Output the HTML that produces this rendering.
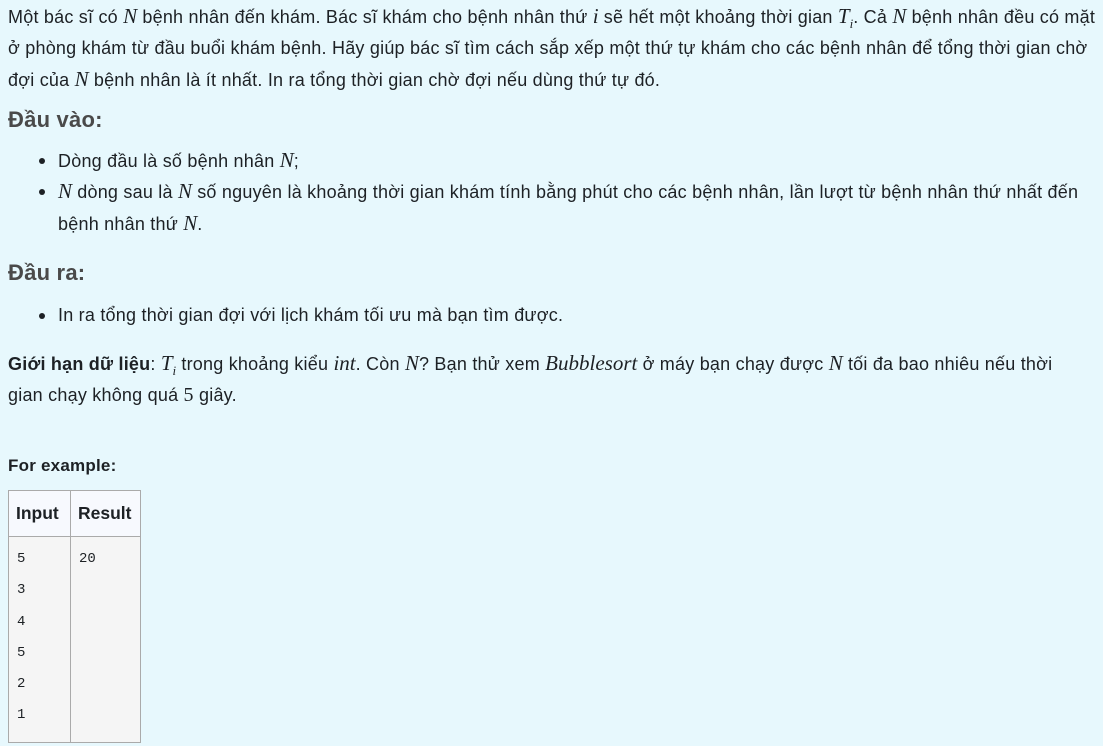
<!DOCTYPE html>
<html><head><meta charset="utf-8"><style>
body{margin:0;background:#e7f8fd;width:1103px;height:746px;overflow:hidden;font-family:"Liberation Sans",sans-serif;color:#1d2125;font-size:18px;letter-spacing:0.22px;}
.l{position:absolute;white-space:nowrap;line-height:20px;}
.m{font-family:"Liberation Serif",serif;font-style:italic;font-size:21px;letter-spacing:0;}
.h{font-weight:bold;font-size:22px;color:#4a4a4a;}
.b{position:absolute;width:6px;height:6px;border-radius:3px;background:#1d2125;}
table{position:absolute;left:8px;top:490px;border-collapse:collapse;letter-spacing:0;}
td,th{border:1px solid #aaa;text-align:left;}
th{background:#f7f9fe;height:45px;padding:0 7px;font-size:17.5px;vertical-align:middle;}
td{background:#f5f5f5;font-family:"Liberation Mono",monospace;font-size:14px;padding:7px 8px 10px;line-height:31.3px;height:181px;vertical-align:top;}
</style></head><body>
<div class="l" style="left:8px;top:6px">Một bác sĩ có <span class="m">N</span> bệnh nhân đến khám. Bác sĩ khám cho bệnh nhân thứ <span class="m">i</span> sẽ hết một khoảng thời gian <span class="m">T<sub style="font-size:13px">i</sub></span>. Cả <span class="m">N</span> bệnh nhân đều có mặt</div>
<div class="l" style="left:8px;top:38px">ở phòng khám từ đầu buổi khám bệnh. Hãy giúp bác sĩ tìm cách sắp xếp một thứ tự khám cho các bệnh nhân để tổng thời gian chờ</div>
<div class="l" style="left:8px;top:69px">đợi của <span class="m">N</span> bệnh nhân là ít nhất. In ra tổng thời gian chờ đợi nếu dùng thứ tự đó.</div>
<div class="l h" style="left:8px;top:110px">Đầu vào:</div>
<div class="b" style="left:39px;top:158px"></div>
<div class="l" style="left:58px;top:150px">Dòng đầu là số bệnh nhân <span class="m">N</span>;</div>
<div class="b" style="left:39px;top:189px"></div>
<div class="l" style="left:58px;top:181px"><span class="m">N</span> dòng sau là <span class="m">N</span> số nguyên là khoảng thời gian khám tính bằng phút cho các bệnh nhân, lần lượt từ bệnh nhân thứ nhất đến</div>
<div class="l" style="left:58px;top:213px">bệnh nhân thứ <span class="m">N</span>.</div>
<div class="l h" style="left:8px;top:263px">Đầu ra:</div>
<div class="b" style="left:39px;top:313px"></div>
<div class="l" style="left:58px;top:305px">In ra tổng thời gian đợi với lịch khám tối ưu mà bạn tìm được.</div>
<div class="l" style="left:8px;top:353px"><b>Giới hạn dữ liệu</b>: <span class="m">T<sub style="font-size:13px">i</sub></span> trong khoảng kiểu <span class="m">int</span>. Còn <span class="m">N</span>? Bạn thử xem <span class="m">Bubblesort</span> ở máy bạn chạy được <span class="m">N</span> tối đa bao nhiêu nếu thời</div>
<div class="l" style="left:8px;top:385px">gian chạy không quá <span style="font-family:'Liberation Serif',serif;font-size:20px">5</span> giây.</div>
<div class="l" style="left:8px;top:456px;font-weight:bold;font-size:17px">For example:</div>
<table><tr><th style="width:47px">Input</th><th style="width:55px">Result</th></tr>
<tr><td>5<br>3<br>4<br>5<br>2<br>1</td><td>20</td></tr></table>
</body></html>
